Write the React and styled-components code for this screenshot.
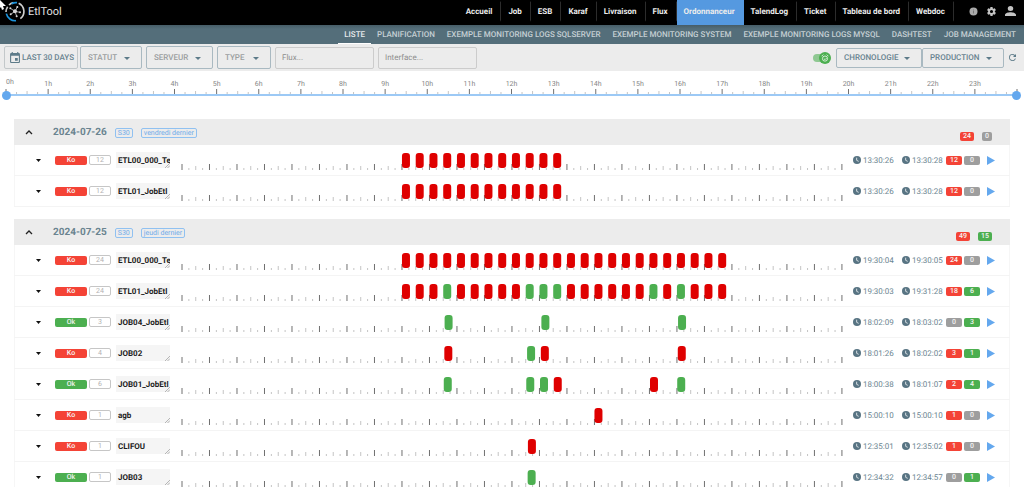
import React, { useState } from "react";
import styled, { createGlobalStyle } from "styled-components";

const Global = createGlobalStyle`
  *, *::before, *::after { box-sizing: border-box; }
  body {
    margin: 0;
    background: #fff;
    font-family: Roboto, "Liberation Sans", sans-serif;
    font-size: 8px;
    text-rendering: geometricPrecision;
    overflow-x: hidden;
  }
  button, input, select, textarea { font-family: inherit; margin: 0; text-rendering: inherit; }
  svg { display: block; flex-shrink: 0; }
`;

const BLUE = "#64a8ee";
const RED = "#f44336";
const GREEN = "#4caf50";
const GREY = "#9e9e9e";

const TopBar = styled.header`
  display: flex;
  align-items: stretch;
  height: 25px;
  background: #000;
  position: relative;
`;
const Brand = styled.a`
  display: flex;
  align-items: center;
  gap: 3px;
  padding: 0 0 3px 5px;
  color: #e4e4e4;
  font-size: 11px;
  text-decoration: none;
  margin-right: auto;
`;
const Pointer = styled.svg`
  position: absolute;
  left: 0;
  top: 0;
`;
const MainNav = styled.nav`
  display: flex;
`;
const MainLink = styled.a`
  display: flex;
  align-items: center;
  padding: 0 8px 3px 7px;
  border-right: 1px solid ${(p) => (p.$active ? "#5599e0" : "#000")};
  border-image: ${(p) => (p.$active ? "none" : "linear-gradient(#000 8%, #2c2c2c 12%, #2c2c2c 78%, #000 84%) 1")};
  border-width: 0 1px 0 0;
  background: ${(p) => (p.$active ? "#5599e0" : "transparent")};
  color: #ececec;
  font-size: 8px;
  font-weight: 700;
  text-decoration: none;
  white-space: nowrap;
`;
const Tools = styled.div`
  display: flex;
  align-items: center;
  gap: 9px;
  padding: 0 8px 3px 15px;
`;
const IconButton = styled.button`
  display: flex;
  border: 0;
  padding: 0;
  background: none;
  color: ${(p) => p.$color || "#c4c4c4"};
  cursor: pointer;
`;

const SubBar = styled.nav`
  display: flex;
  justify-content: flex-end;
  height: 19px;
  padding-right: 2px;
  background: linear-gradient(#465d68, #546e7a 4px);
`;
const SubLink = styled.a`
  display: flex;
  align-items: center;
  padding: 0 6px;
  border-bottom: 1px solid ${(p) => (p.$active ? "#fff" : "transparent")};
  color: ${(p) => (p.$active ? "#e6eaec" : "#c6d0d4")};
  font-size: 8px;
  font-weight: 500;
  text-decoration: none;
  white-space: nowrap;
`;

const Filters = styled.form`
  display: flex;
  align-items: center;
  gap: 4px;
  height: 27px;
  padding: 0 8px 0 4px;
  background: #ececec;
`;
const Push = styled.div`
  display: flex;
  align-items: center;
  margin-left: auto;
`;
const RangeButton = styled.button`
  display: flex;
  align-items: center;
  gap: 2px;
  height: 23px;
  width: 74px;
  margin-right: -2px;
  padding: 0 0 0 5px;
  border: 1px solid #c3c8ca;
  border-radius: 2px;
  background: none;
  color: #67828f;
  font-size: 8px;
  font-weight: 500;
  white-space: nowrap;
`;
const Picker = styled.label`
  position: relative;
  display: block;
  width: ${(p) => p.$width}px;
  height: ${(p) => (p.$dense ? 20 : 23)}px;
`;
const Select = styled.select`
  appearance: none;
  width: 100%;
  height: 100%;
  padding: 0 0 0 7px;
  border: 1px solid #a9b9c1;
  border-radius: 2px;
  background: none;
  color: ${(p) => (p.$strong ? "#67828f" : "#9b9e9f")};
  font-size: 8px;
  font-weight: 500;
`;
const PickerArrow = styled.svg`
  position: absolute;
  right: 12px;
  top: calc(50% - 1px);
  pointer-events: none;
`;
const Search = styled.input`
  width: 99px;
  height: 22px;
  padding: 0 6px;
  border: 1px solid #cccccc;
  border-radius: 2px;
  background: none;
  color: #666;
  font-size: 8px;
  &::placeholder { color: #8e8e8e; opacity: 1; }
`;
const Switch = styled.label`
  position: relative;
  display: flex;
  align-items: center;
  width: 18px;
  height: 12px;
  margin-right: 5px;
`;
const SwitchInput = styled.input`
  appearance: none;
  width: 15px;
  height: 8px;
  border-radius: 4px;
  background: ${(p) => (p.checked ? "#8fc892" : "#bbb")};
`;
const SwitchThumb = styled.span`
  position: absolute;
  right: 0;
  top: 0;
  display: flex;
  align-items: center;
  justify-content: center;
  width: 12px;
  height: 12px;
  border-radius: 50%;
  background: ${GREEN};
  pointer-events: none;
`;
const Refresh = styled(IconButton)`
  margin-left: 5px;
`;

const DayScale = styled.section`
  position: relative;
  height: 30px;
  margin: 0 7px 0 6px;
`;
const ScaleChart = styled.svg`
  width: 100%;
  height: 30px;
  overflow: visible;
`;
const ScaleText = styled.text`
  font-size: 7px;
  fill: #858585;
`;
const Thumb = styled.input`
  appearance: none;
  position: absolute;
  left: -4px;
  top: 19px;
  width: calc(100% + 8px);
  height: 10px;
  background: none;
  pointer-events: none;
  &::-webkit-slider-thumb {
    appearance: none;
    width: 9px;
    height: 9px;
    border-radius: 50%;
    background: ${BLUE};
    pointer-events: auto;
  }
`;

const Days = styled.main`
  display: flex;
  flex-direction: column;
  gap: 12px;
  padding: 18px 14px 0;
`;
const DayTable = styled.table`
  width: 100%;
  table-layout: fixed;
  border-collapse: separate;
  border-spacing: 0;
  box-shadow: inset 0 0 0 1px #f6f6f6;
`;
const DayHead = styled.th`
  padding: 0;
  background: #ececec;
  font-weight: 400;
`;
const DayLine = styled.div`
  display: flex;
  align-items: center;
  height: 26px;
  padding: 0 18px 0 11px;
`;
const DayDate = styled.span`
  margin-left: 20px;
  color: #6a8490;
  font-size: 10px;
  font-weight: 700;
`;
const Chip = styled.span`
  margin: 2px 0 0 8px;
  padding: 0 2px;
  border: 1px solid #90c1f1;
  border-radius: 2px;
  color: #6fabea;
  font-size: 7px;
  line-height: 8px;
`;
const DayTotals = styled.span`
  display: flex;
  gap: 8px;
  margin-left: auto;
  padding-top: 8px;
`;
const Badge = styled.span`
  display: inline-block;
  min-width: ${(p) => p.$width || 0}px;
  padding: 0 3px;
  border-radius: 2px;
  background: ${(p) => p.$color};
  color: #f4f4f4;
  font-size: 7px;
  font-weight: 500;
  line-height: 9px;
  text-align: center;
`;
const RunCount = styled.span`
  width: 22px;
  border: 1px solid #c6c6c6;
  border-radius: 2px;
  color: #b2b2b2;
  font-size: 7px;
  line-height: 8px;
  text-align: center;
`;
const Cell = styled.td`
  height: 31px;
  padding: 0 0 0 ${(p) => p.$pad || 0}px;
  border-bottom: 1px solid #f4f4f4;
  vertical-align: middle;
`;
const Inline = styled.div`
  display: flex;
  align-items: center;
  gap: 2px;
  color: #6b8591;
  font-size: 8px;
`;
const NameBox = styled.div`
  position: relative;
  width: 54px;
  height: 16px;
`;
const JobName = styled.textarea`
  display: block;
  width: 100%;
  height: 100%;
  padding: 4px 0 0 2px;
  border: 0;
  background: #f5f5f5;
  color: #1c1c1c;
  font-size: 8px;
  font-weight: 700;
  line-height: 10px;
  white-space: pre;
  overflow: hidden;
  resize: none;
`;
const Grip = styled.svg`
  position: absolute;
  right: 0;
  bottom: 0;
`;
const Track = styled.svg`
  width: 100%;
  height: 30px;
  overflow: visible;
`;

const Arrow = ({ size = 5, color = "#111" }) => (
  <svg width={size} height="3" viewBox="0 0 10 6" fill={color} preserveAspectRatio="none"><path d="M0 0h10L5 6z" /></svg>
);
const Clock = () => (
  <svg width="8" height="8" viewBox="0 0 24 24">
    <circle cx="12" cy="12" r="12" fill="#587483" />
    <path d="M11 5v8l6 3" fill="none" stroke="#e8eef0" strokeWidth="2.6" />
  </svg>
);
const Logo = () => (
  <svg width="20" height="21" viewBox="0 0 60 63" fill="none">
    <g strokeWidth="5">
      <path d="M12 12A27 27 0 0 1 25 5" stroke="#c9c9c9" />
      <path d="M20 8A27 27 0 0 1 36 5" stroke="#1c94dc" />
      <path d="M41 7A27 27 0 0 1 46 53" stroke="#cfcfcf" />
      <path d="M33 59A27 27 0 0 1 4 38" stroke="#1c94dc" />
      <path d="M3 33A27 27 0 0 1 8 17" stroke="#c4c4c4" />
    </g>
    <g stroke="#aaa" strokeWidth="3"><path d="M30 31L16 22M30 31L37 18M30 31L45 34M30 31L35 46M30 31L17 40" /></g>
    <g fill="#d6d6d6"><circle cx="30" cy="31" r="6" /><circle cx="16" cy="22" r="3" /><circle cx="37" cy="18" r="3" /><circle cx="45" cy="34" r="3" /><circle cx="35" cy="46" r="3" /><circle cx="17" cy="40" r="3" /></g>
  </svg>
);
const Gear = () => (
  <svg width="9" height="9" viewBox="2 2 20 20" fill="currentColor"><path d="M12 15.5A3.5 3.5 0 0 1 8.5 12 3.5 3.5 0 0 1 12 8.5a3.5 3.5 0 0 1 3.500 3.500 3.500 3.500 0 0 1-3.500 3.500m7.430-2.530c.04-.32.07-.64.07-.97s-.03-.66-.07-1l2.110-1.630c.19-.15.24-.42.12-.64l-2-3.460c-.12-.22-.39-.31-.61-.22l-2.490 1c-.52-.39-1.060-.73-1.690-.98l-.37-2.650A.506.506 0 0 0 14 2h-4c-.25 0-.46.18-.5.42l-.37 2.650c-.63.25-1.170.59-1.690.98l-2.490-1c-.22-.09-.49 0-.61.22l-2 3.460c-.13.22-.07.49.12.64L4.570 11c-.04.34-.07.67-.07 1s.03.65.07.97l-2.110 1.660c-.19.15-.25.42-.12.64l2 3.460c.12.22.39.3.61.22l2.490-1.010c.52.4 1.060.74 1.690.99l.37 2.650c.04.24.25.42.5.42h4c.25 0 .46-.18.5-.42l.37-2.650c.63-.26 1.170-.59 1.690-.99l2.490 1.010c.22.08.49 0 .61-.22l2-3.460c.12-.22.07-.49-.12-.64z" /></svg>
);

const MAIN = ["Accueil", "Job", "ESB", "Karaf", "Livraison", "Flux", "Ordonnanceur", "TalendLog", "Ticket", "Tableau de bord", "Webdoc"];
const SUB = ["LISTE", "PLANIFICATION", "EXEMPLE MONITORING LOGS SQLSERVER", "EXEMPLE MONITORING SYSTEM", "EXEMPLE MONITORING LOGS MYSQL", "DASHTEST", "JOB MANAGEMENT"];

// A run is [start in decimal hours, succeeded].
const every30 = (count, okAt = []) =>
  Array.from({ length: count }, (_, i) => [8 + i / 2, okAt.includes(i)]);

const DAYS = [
  {
    date: "2024-07-26", week: "S30", label: "vendredi dernier", ko: 24, ok: 0,
    jobs: [
      { name: "ETL00_000_Template", ko: 12, ok: 0, start: "13:30:26", end: "13:30:28", runs: every30(12) },
      { name: "ETL01_JobEtl", ko: 12, ok: 0, start: "13:30:26", end: "13:30:28", runs: every30(12) },
    ],
  },
  {
    date: "2024-07-25", week: "S30", label: "jeudi dernier", ko: 49, ok: 15,
    jobs: [
      { name: "ETL00_000_Template", ko: 24, ok: 0, start: "19:30:04", end: "19:30:05", runs: every30(24) },
      { name: "ETL01_JobEtl", ko: 18, ok: 6, start: "19:30:03", end: "19:31:28", runs: every30(24, [3, 9, 10, 11, 18, 20]) },
      { name: "JOB04_JobEtl", ko: 0, ok: 3, start: "18:02:09", end: "18:03:02", runs: [[9.55, true], [13.07, true], [18.04, true]] },
      { name: "JOB02", ko: 3, ok: 1, start: "18:01:26", end: "18:02:02", runs: [[9.54, false], [12.55, true], [13.05, false], [18.03, false]] },
      { name: "JOB01_JobEtl", ko: 2, ok: 4, last: "Ok", start: "18:00:38", end: "18:01:07", runs: [[9.52, true], [12.52, true], [13.02, true], [13.52, false], [17.02, false], [18.01, true]] },
      { name: "agb", ko: 1, ok: 0, start: "15:00:10", end: "15:00:10", runs: [[15, false]] },
      { name: "CLIFOU", ko: 1, ok: 0, start: "12:35:01", end: "12:35:02", runs: [[12.58, false]] },
      { name: "JOB03", ko: 0, ok: 1, start: "12:34:32", end: "12:34:57", runs: [[12.57, true]] },
    ],
  },
];

const pct = (hour) => `${(hour / 24) * 100}%`;
const QUARTERS = Array.from({ length: 97 }, (_, i) => i);

function Ticks({ bottom, tall, mid, low }) {
  return QUARTERS.map((q) => {
    const hour = q % 4 === 0;
    const h = hour ? tall : q % 2 === 0 ? mid : low;
    return (
      <line key={q} x1={pct(q / 4)} x2={pct(q / 4)} y1={bottom - h} y2={bottom}
        stroke={hour ? "#707070" : "#c4c4c4"} strokeWidth="1" />
    );
  });
}

function Timeline({ runs }) {
  return (
    <Track role="img" aria-label="Exécutions sur 24 heures">
      <Ticks bottom={25} tall={6} mid={4} low={2} />
      {runs.map(([at, ok]) => (
        <rect key={at} x={pct(at)} y="8" width="8" height="15" rx="3" fill={ok ? GREEN : "#df0000"} />
      ))}
    </Track>
  );
}

function Scale() {
  return (
    <DayScale>
      <ScaleChart>
        <Ticks bottom={23} tall={5} mid={3} low={2} />
        {QUARTERS.slice(0, 24).map((h) => (
          <ScaleText key={h} x={pct(h)} dx={h ? 0 : 4} y={h ? 15 : 13} textAnchor="middle">{h}h</ScaleText>
        ))}
        <line x1="0" x2="100%" y1="24" y2="24" stroke="#9cc9f5" strokeWidth="2" />
      </ScaleChart>
      <Thumb type="range" min="0" max="24" defaultValue="0" aria-label="Heure de début" />
      <Thumb type="range" min="0" max="24" defaultValue="24" aria-label="Heure de fin" />
    </DayScale>
  );
}

function DropDown({ label, width, strong, dense }) {
  return (
    <Picker $width={width} $dense={dense}>
      <Select $strong={strong} aria-label={label} defaultValue={label}>
        <option>{label}</option>
      </Select>
      <PickerArrow width="6" height="3" viewBox="0 0 12 6" fill="#5d7b89"><path d="M0 0h12L6 6z" /></PickerArrow>
    </Picker>
  );
}

function JobRow({ job }) {
  const status = job.last || (job.ko ? "Ko" : "Ok");
  return (
    <tr>
      <Cell $pad={22}><IconButton aria-label="Déplier"><Arrow /></IconButton></Cell>
      <Cell $pad={1}>
        <Inline>
          <Badge $width={32} $color={status === "Ko" ? RED : GREEN}>{status}</Badge>
          <RunCount>{job.ko + job.ok}</RunCount>
        </Inline>
      </Cell>
      <Cell $pad={2}>
        <NameBox>
          <JobName readOnly rows={1} aria-label="Nom du job" value={job.name} />
          <Grip width="5" height="5" viewBox="0 0 5 5" stroke="#999" strokeWidth="0.7"><path d="M0 5L5 0M2.500 5L5 2.500" /></Grip>
        </NameBox>
      </Cell>
      <Cell><Timeline runs={job.runs} /></Cell>
      <Cell $pad={11}><Inline><Clock />{job.start}</Inline></Cell>
      <Cell><Inline><Clock />{job.end}</Inline></Cell>
      <Cell $pad={1}>
        <Inline>
          <Badge $width={16} $color={job.ko ? RED : GREY}>{job.ko}</Badge>
          <Badge $width={16} $color={job.ok ? GREEN : GREY}>{job.ok}</Badge>
        </Inline>
      </Cell>
      <Cell $pad={4}>
        <IconButton $color={BLUE} aria-label="Lancer">
          <svg width="8" height="9" viewBox="0 0 8 9" fill="currentColor"><path d="M0 0l8 4.500L0 9z" /></svg>
        </IconButton>
      </Cell>
    </tr>
  );
}

function Day({ day }) {
  return (
    <DayTable>
      <colgroup>
        {[40, 60, 68, undefined, 60, 43, 38, 27].map((w, i) => <col key={i} width={w} />)}
      </colgroup>
      <thead>
        <tr>
          <DayHead colSpan={8}>
            <DayLine>
              <IconButton $color="#222" aria-label="Replier">
                <svg width="8" height="6" viewBox="0 0 8 6" fill="none" stroke="currentColor" strokeWidth="1.300"><path d="M1 5l3-3 3 3" /></svg>
              </IconButton>
              <DayDate>{day.date}</DayDate>
              <Chip>{day.week}</Chip>
              <Chip>{day.label}</Chip>
              <DayTotals>
                <Badge $color={RED}>{day.ko}</Badge>
                <Badge $color={day.ok ? GREEN : GREY}>{day.ok}</Badge>
              </DayTotals>
            </DayLine>
          </DayHead>
        </tr>
      </thead>
      <tbody>{day.jobs.map((job) => <JobRow key={job.name} job={job} />)}</tbody>
    </DayTable>
  );
}

export default function App() {
  const [live, setLive] = useState(true);
  return (
    <>
      <Global />
      <TopBar>
        <Brand href="#"><Logo />EtlTool</Brand>
        <Pointer width="7" height="10" viewBox="0 0 7 10"><path d="M0 0l6 6H3l1 3-2 1-1-3-1 1z" fill="#fff" /></Pointer>
        <MainNav>
          {MAIN.map((t) => <MainLink key={t} href="#" $active={t === "Ordonnanceur"}>{t}</MainLink>)}
        </MainNav>
        <Tools>
          <IconButton aria-label="Aide"><svg width="9" height="9" viewBox="0 0 18 18"><circle cx="9" cy="9" r="8" fill="#aaa" /><path d="M9 8v5M9 5v2" stroke="#777" strokeWidth="2" /></svg></IconButton>
          <IconButton aria-label="Réglages"><Gear /></IconButton>
          <IconButton aria-label="Compte"><svg width="11" height="10" viewBox="4 4 16 16" fill="currentColor" preserveAspectRatio="none"><path d="M12 12a4 4 0 1 0 0-8 4 4 0 0 0 0 8m0 2c-2.700 0-8 1.300-8 4v2h16v-2c0-2.700-5.300-4-8-4" /></svg></IconButton>
        </Tools>
      </TopBar>
      <SubBar>
        {SUB.map((t) => <SubLink key={t} href="#" $active={t === "LISTE"}>{t}</SubLink>)}
      </SubBar>
      <Filters onSubmit={(e) => e.preventDefault()}>
        <RangeButton type="button">
          <svg width="10" height="11" viewBox="3 1 18 20" fill="#5d7b89"><path d="M19 3h-1V1h-2v2H8V1H6v2H5a2 2 0 0 0-2 2v14a2 2 0 0 0 2 2h14a2 2 0 0 0 2-2V5a2 2 0 0 0-2-2m0 16H5V8h14zm-2-7h-5v5h5z" /></svg>
          LAST 30 DAYS
        </RangeButton>
        <DropDown label="STATUT" width={62} />
        <DropDown label="SERVEUR" width={67} />
        <DropDown label="TYPE" width={54} />
        <Search aria-label="Flux" placeholder="Flux..." />
        <Search aria-label="Interface" placeholder="Interface..." />
        <Push>
          <Switch>
            <SwitchInput type="checkbox" checked={live} onChange={() => setLive(!live)} aria-label="Actualisation" />
            <SwitchThumb>
              <svg width="8" height="8" viewBox="0 0 14 14" fill="none" stroke="#e6f4e6" strokeWidth="1.500"><circle cx="7" cy="8" r="4.500" /><path d="M1 4l3-3M13 4l-3-3M5 8l2 2 3-3" /></svg>
            </SwitchThumb>
          </Switch>
          <DropDown label="CHRONOLOGIE" width={86} strong dense />
          <DropDown label="PRODUCTION" width={82} strong dense />
          <Refresh type="button" $color="#5d7b89" aria-label="Actualiser">
            <svg width="7" height="7" viewBox="4 4 16 16" fill="currentColor"><path d="M17.650 6.350A7.960 7.960 0 0 0 12 4a8 8 0 1 0 7.730 10h-2.080A6 6 0 1 1 12 6c1.660 0 3.140.69 4.220 1.780L13 11h7V4z" /></svg>
          </Refresh>
        </Push>
      </Filters>
      <Scale />
      <Days>
        {DAYS.map((d) => <Day key={d.date} day={d} />)}
      </Days>
    </>
  );
}
